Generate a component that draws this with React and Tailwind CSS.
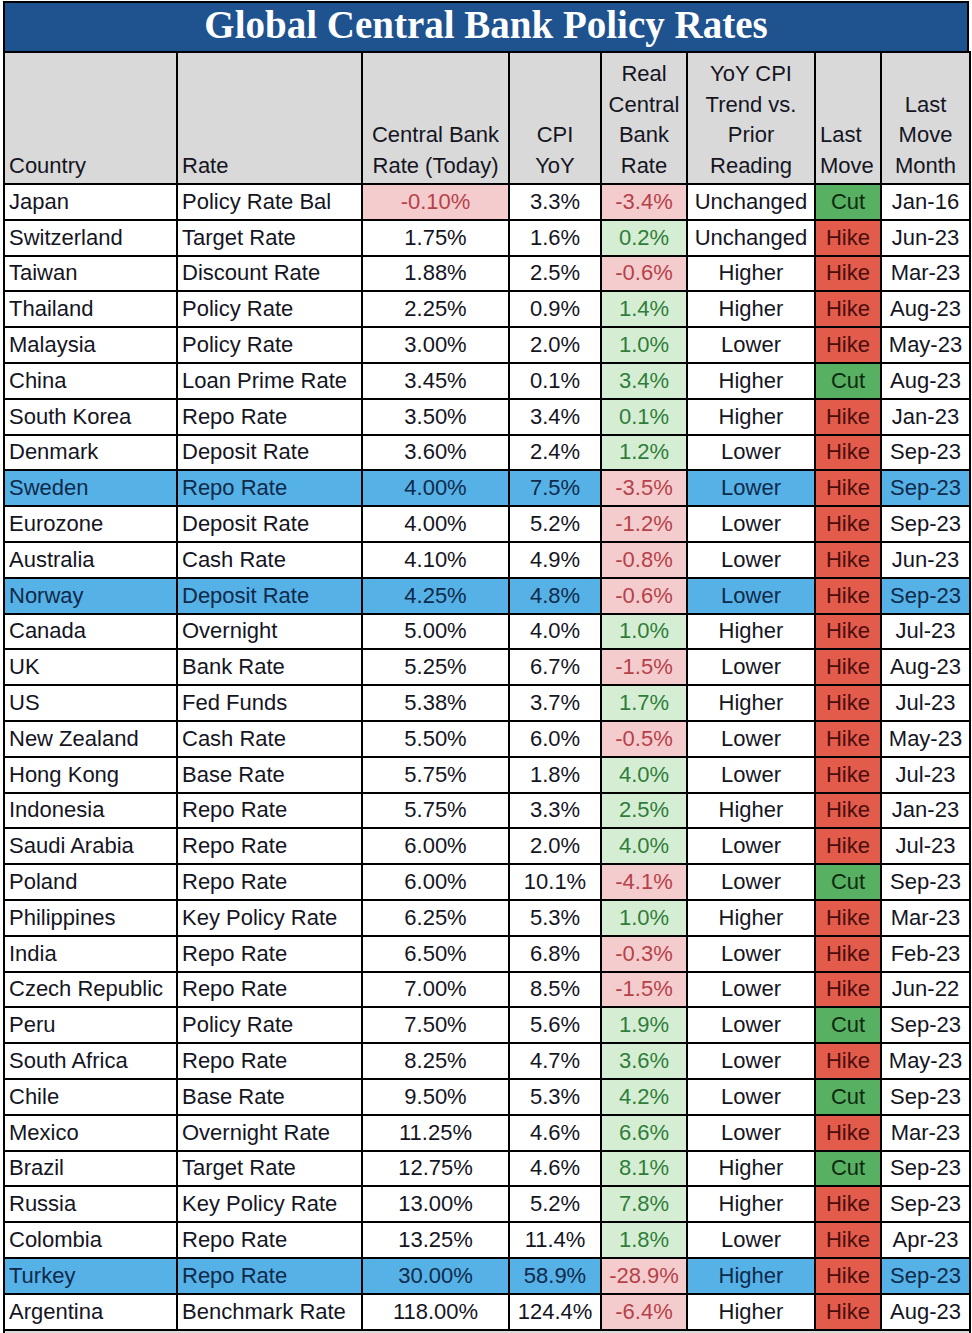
import React from "react";

const rows = [
  ["Japan", "Policy Rate Bal", "-0.10%", "3.3%", "-3.4%", "Unchanged", "Cut", "Jan-16"],
  ["Switzerland", "Target Rate", "1.75%", "1.6%", "0.2%", "Unchanged", "Hike", "Jun-23"],
  ["Taiwan", "Discount Rate", "1.88%", "2.5%", "-0.6%", "Higher", "Hike", "Mar-23"],
  ["Thailand", "Policy Rate", "2.25%", "0.9%", "1.4%", "Higher", "Hike", "Aug-23"],
  ["Malaysia", "Policy Rate", "3.00%", "2.0%", "1.0%", "Lower", "Hike", "May-23"],
  ["China", "Loan Prime Rate", "3.45%", "0.1%", "3.4%", "Higher", "Cut", "Aug-23"],
  ["South Korea", "Repo Rate", "3.50%", "3.4%", "0.1%", "Higher", "Hike", "Jan-23"],
  ["Denmark", "Deposit Rate", "3.60%", "2.4%", "1.2%", "Lower", "Hike", "Sep-23"],
  ["Sweden", "Repo Rate", "4.00%", "7.5%", "-3.5%", "Lower", "Hike", "Sep-23", true],
  ["Eurozone", "Deposit Rate", "4.00%", "5.2%", "-1.2%", "Lower", "Hike", "Sep-23"],
  ["Australia", "Cash Rate", "4.10%", "4.9%", "-0.8%", "Lower", "Hike", "Jun-23"],
  ["Norway", "Deposit Rate", "4.25%", "4.8%", "-0.6%", "Lower", "Hike", "Sep-23", true],
  ["Canada", "Overnight", "5.00%", "4.0%", "1.0%", "Higher", "Hike", "Jul-23"],
  ["UK", "Bank Rate", "5.25%", "6.7%", "-1.5%", "Lower", "Hike", "Aug-23"],
  ["US", "Fed Funds", "5.38%", "3.7%", "1.7%", "Higher", "Hike", "Jul-23"],
  ["New Zealand", "Cash Rate", "5.50%", "6.0%", "-0.5%", "Lower", "Hike", "May-23"],
  ["Hong Kong", "Base Rate", "5.75%", "1.8%", "4.0%", "Lower", "Hike", "Jul-23"],
  ["Indonesia", "Repo Rate", "5.75%", "3.3%", "2.5%", "Higher", "Hike", "Jan-23"],
  ["Saudi Arabia", "Repo Rate", "6.00%", "2.0%", "4.0%", "Lower", "Hike", "Jul-23"],
  ["Poland", "Repo Rate", "6.00%", "10.1%", "-4.1%", "Lower", "Cut", "Sep-23"],
  ["Philippines", "Key Policy Rate", "6.25%", "5.3%", "1.0%", "Higher", "Hike", "Mar-23"],
  ["India", "Repo Rate", "6.50%", "6.8%", "-0.3%", "Lower", "Hike", "Feb-23"],
  ["Czech Republic", "Repo Rate", "7.00%", "8.5%", "-1.5%", "Lower", "Hike", "Jun-22"],
  ["Peru", "Policy Rate", "7.50%", "5.6%", "1.9%", "Lower", "Cut", "Sep-23"],
  ["South Africa", "Repo Rate", "8.25%", "4.7%", "3.6%", "Lower", "Hike", "May-23"],
  ["Chile", "Base Rate", "9.50%", "5.3%", "4.2%", "Lower", "Cut", "Sep-23"],
  ["Mexico", "Overnight Rate", "11.25%", "4.6%", "6.6%", "Lower", "Hike", "Mar-23"],
  ["Brazil", "Target Rate", "12.75%", "4.6%", "8.1%", "Higher", "Cut", "Sep-23"],
  ["Russia", "Key Policy Rate", "13.00%", "5.2%", "7.8%", "Higher", "Hike", "Sep-23"],
  ["Colombia", "Repo Rate", "13.25%", "11.4%", "1.8%", "Lower", "Hike", "Apr-23"],
  ["Turkey", "Repo Rate", "30.00%", "58.9%", "-28.9%", "Higher", "Hike", "Sep-23", true],
  ["Argentina", "Benchmark Rate", "118.00%", "124.4%", "-6.4%", "Higher", "Hike", "Aug-23"],
];

const cell = "border-2 border-black px-[4px] py-0 leading-none whitespace-nowrap";
const head = "border-2 border-black px-[4px] pt-0 pb-[2px] leading-[30.5px] whitespace-nowrap align-bottom font-normal";

const App = () => {
  return (
    <div className="w-[972px] h-[1333px] bg-white px-[3px] pt-[1px] overflow-hidden text-[#15151f]" style={{ fontFamily: '"Liberation Sans", Arial, sans-serif' }}>
      <div
        className="h-[50px] bg-[#1f5390] border-2 border-black border-b-0 flex items-center justify-center text-white font-bold text-[39px] pb-[3px]"
        style={{ fontFamily: '"Liberation Serif", "DejaVu Serif", serif' }}
      >
        Global Central Bank Policy Rates
      </div>
      <table className="w-[966px] border-collapse table-fixed text-[22px]">
        <colgroup>
          <col className="w-[173px]" />
          <col className="w-[185px]" />
          <col className="w-[147px]" />
          <col className="w-[92px]" />
          <col className="w-[86px]" />
          <col className="w-[128px]" />
          <col className="w-[66px]" />
          <col className="w-[89px]" />
        </colgroup>
        <thead>
          <tr className="h-[132px] bg-[#d9d9d9]">
            <th className={`${head} text-left`}>Country</th>
            <th className={`${head} text-left`}>Rate</th>
            <th className={`${head} text-center`}>
              Central Bank<br />Rate (Today)
            </th>
            <th className={`${head} text-center`}>
              CPI<br />YoY
            </th>
            <th className={`${head} text-center`}>
              Real<br />Central<br />Bank<br />Rate
            </th>
            <th className={`${head} text-center`}>
              YoY CPI<br />Trend vs.<br />Prior<br />Reading
            </th>
            <th className={`${head} text-left`}>
              Last<br />Move
            </th>
            <th className={`${head} text-center`}>
              Last<br />Move<br />Month
            </th>
          </tr>
        </thead>
        <tbody>
          {rows.map((r) => {
            const hl = r[8];
            const base = hl ? "bg-[#56b1e7] text-[#0f2a4a]" : "bg-white";
            const negReal = r[4].startsWith("-");
            const cut = r[6] === "Cut";
            return (
              <tr key={r[0]} className={`h-[35.8px] ${base}`}>
                <td className={`${cell} text-left`}>{r[0]}</td>
                <td className={`${cell} text-left`}>{r[1]}</td>
                <td className={`${cell} text-center ${r[2].startsWith("-") ? "bg-[#f5cccd] text-[#b5424a]" : ""}`}>{r[2]}</td>
                <td className={`${cell} text-center`}>{r[3]}</td>
                <td
                  className={`${cell} text-center ${
                    negReal ? "bg-[#f5cccd] text-[#b5424a]" : "bg-[#d5eed3] text-[#2f7d3a]"
                  }`}
                >
                  {r[4]}
                </td>
                <td className={`${cell} text-center`}>{r[5]}</td>
                <td
                  className={`${cell} text-center ${
                    cut ? "bg-[#58b062] text-[#0d2a10]" : "bg-[#e25b4b] text-[#4a0d0d]"
                  }`}
                >
                  {r[6]}
                </td>
                <td className={`${cell} text-center`}>{r[7]}</td>
              </tr>
            );
          })}
          <tr className="h-[20px] bg-[#d9d9d9]">
            <td colSpan={8} className="border-2 border-black"></td>
          </tr>
        </tbody>
      </table>
    </div>
  );
};

export default App;
